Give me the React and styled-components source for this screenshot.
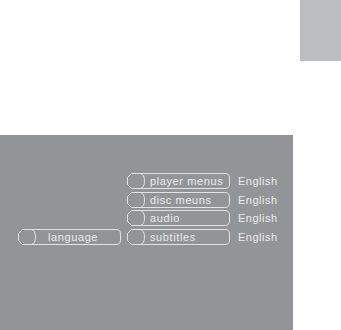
import React from "react";
import styled, { createGlobalStyle } from "styled-components";

const GlobalStyle = createGlobalStyle`
  html, body { margin: 0; padding: 0; background: #ffffff; }
  body { font-family: "Liberation Sans", Arial, sans-serif; }
`;

const Page = styled.div`
  width: 341px;
  height: 330px;
  display: flex;
  flex-direction: column;
  overflow: hidden;
`;

const TopArea = styled.div`
  height: 135px;
  display: flex;
  justify-content: flex-end;
  align-items: flex-start;
`;

const Tab = styled.div`
  width: 41px;
  height: 61px;
  background: #bcbdc0;
`;

const Panel = styled.div`
  width: 293px;
  height: 195px;
  box-sizing: border-box;
  background: #939497;
  padding: 38px 0 0 18px;
  display: grid;
  grid-template-columns: 103px 103px auto;
  grid-auto-rows: 16px;
  column-gap: 6px;
  row-gap: 2.7px;
  align-content: start;
`;

const ButtonWrap = styled.div`
  position: relative;
  width: 103px;
  height: 16px;
  grid-column: ${(p) => p.$col};
  grid-row: ${(p) => p.$row};
`;

const Outline = styled.svg`
  position: absolute;
  inset: 0;
  overflow: visible;
`;

const Label = styled.span`
  position: relative;
  display: block;
  padding-left: ${(p) => p.$indent}px;
  font-size: 11px;
  line-height: 16px;
  letter-spacing: 0.6px;
  color: #ececec;
  white-space: nowrap;
`;

const Value = styled.span`
  grid-column: 3;
  grid-row: ${(p) => p.$row};
  padding-left: 2px;
  font-size: 11px;
  line-height: 16px;
  letter-spacing: 0.5px;
  color: #ececec;
  white-space: nowrap;
`;

function MenuButton({ label, row, col, indent }) {
  const W = 103;
  const H = 16;
  return (
    <ButtonWrap $row={row} $col={col}>
      <Outline width={W} height={H} viewBox={`0 0 ${W} ${H}`}>
        <path
          d={`M 4.5 0.5 H ${W - 5} Q ${W - 0.5} 0.5 ${W - 0.5} 5 V ${H - 5} Q ${W - 0.5} ${H - 0.5} ${W - 5} ${H - 0.5} H 4.5 L 0.5 ${H - 4.5} V 4.5 Z`}
          fill="none"
          stroke="#e2e2e2"
          strokeWidth="1"
        />
        <path
          d={`M 13.5 0.5 Q 17.5 1.5 17.5 8 Q 17.5 14.5 13.5 15.5`}
          fill="none"
          stroke="#e2e2e2"
          strokeWidth="1"
        />
      </Outline>
      <Label $indent={indent}>{label}</Label>
    </ButtonWrap>
  );
}

const items = [
  { label: "player menus", value: "English" },
  { label: "disc meuns", value: "English" },
  { label: "audio", value: "English" },
  { label: "subtitles", value: "English" },
];

export default function App() {
  return (
    <>
      <GlobalStyle />
      <Page>
        <TopArea>
          <Tab />
        </TopArea>
        <Panel>
          <MenuButton label="language" row={4} col={1} indent={30} />
          {items.map((it, i) => (
            <React.Fragment key={it.label}>
              <MenuButton label={it.label} row={i + 1} col={2} indent={23} />
              <Value $row={i + 1}>{it.value}</Value>
            </React.Fragment>
          ))}
        </Panel>
      </Page>
    </>
  );
}
